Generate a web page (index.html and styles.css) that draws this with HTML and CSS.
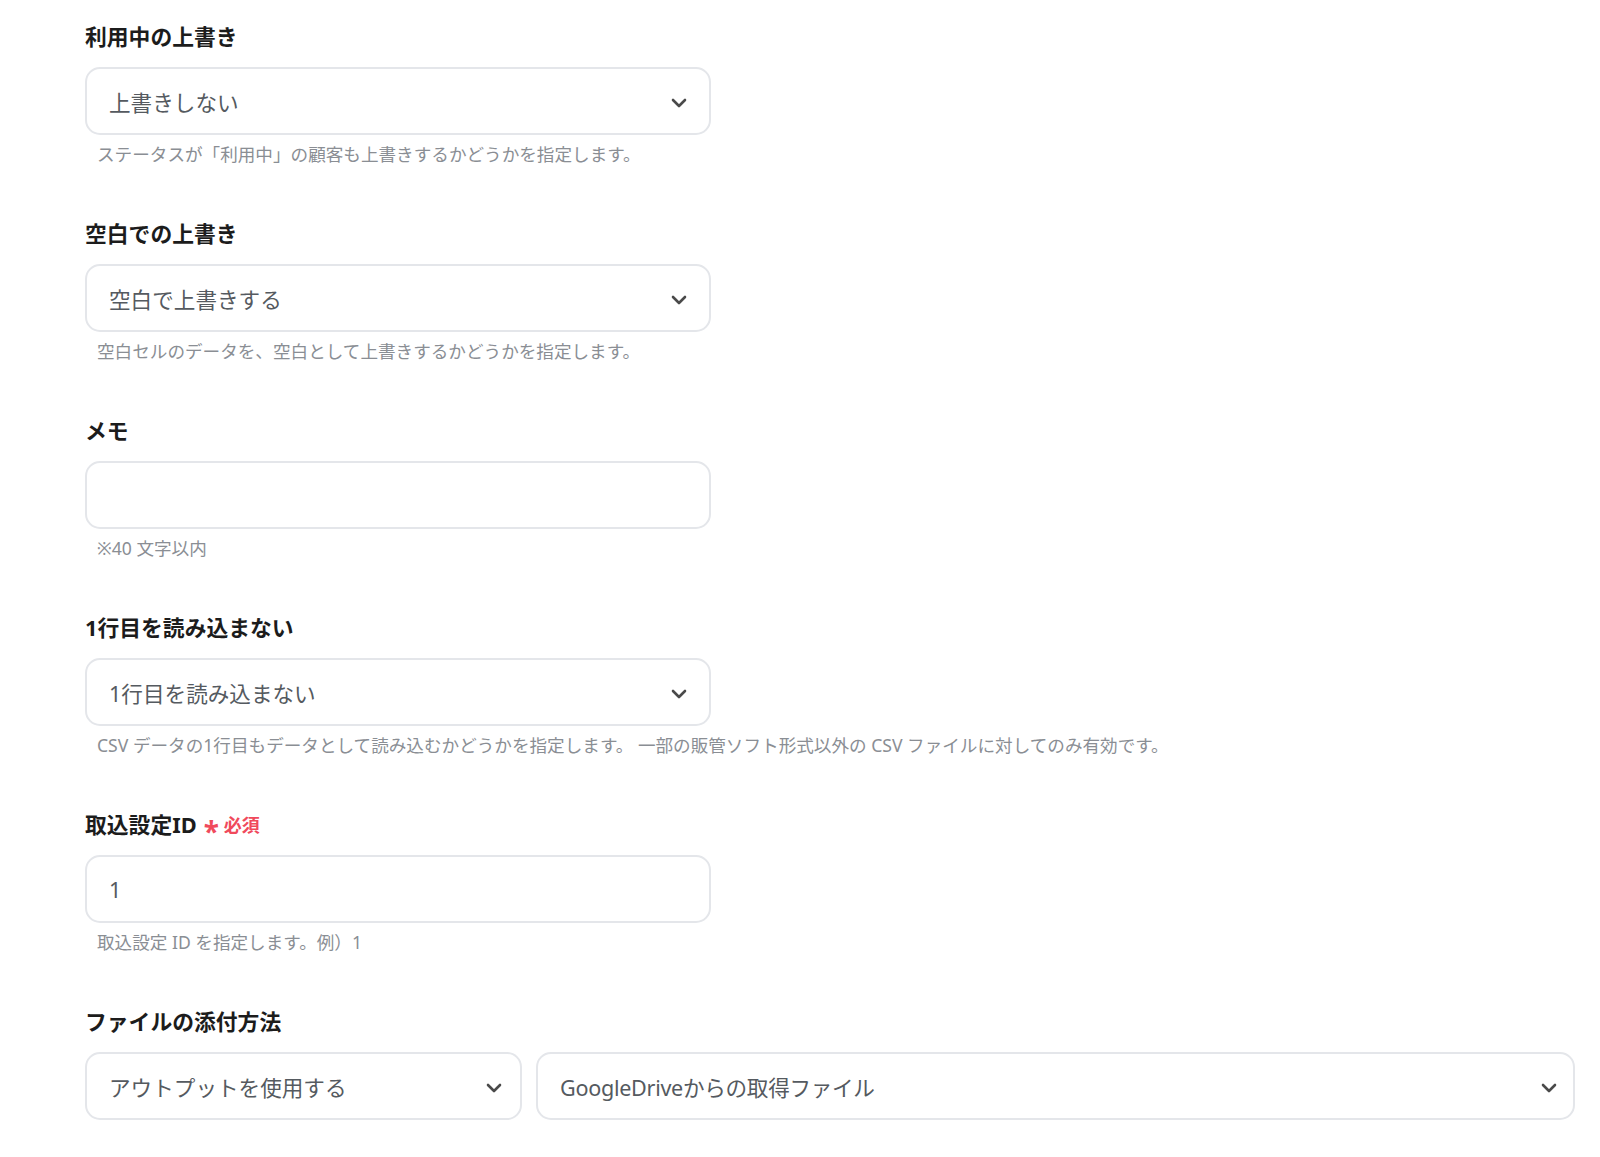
FILE: index.html
```html
<!DOCTYPE html>
<html lang="ja">
<head>
<meta charset="utf-8">
<title>設定</title>
<link rel="stylesheet" href="styles.css">
</head>
<body>
<div class="form">
  <div class="field">
    <div class="label">利用中の上書き</div>
    <div class="box select">
      <span class="value">上書きしない</span>
      <svg class="chev" viewBox="0 0 16 10" width="16" height="10"><path d="M2 2 L8 8 L14 2" fill="none" stroke="#4a4a4a" stroke-width="2.6" stroke-linecap="round" stroke-linejoin="round"/></svg>
    </div>
    <div class="help">ステータスが「利用中」の顧客も上書きするかどうかを指定します。</div>
  </div>

  <div class="field">
    <div class="label">空白での上書き</div>
    <div class="box select">
      <span class="value">空白で上書きする</span>
      <svg class="chev" viewBox="0 0 16 10" width="16" height="10"><path d="M2 2 L8 8 L14 2" fill="none" stroke="#4a4a4a" stroke-width="2.6" stroke-linecap="round" stroke-linejoin="round"/></svg>
    </div>
    <div class="help">空白セルのデータを、空白として上書きするかどうかを指定します。</div>
  </div>

  <div class="field">
    <div class="label">メモ</div>
    <div class="box"></div>
    <div class="help">※40 文字以内</div>
  </div>

  <div class="field">
    <div class="label">1行目を読み込まない</div>
    <div class="box select">
      <span class="value">1行目を読み込まない</span>
      <svg class="chev" viewBox="0 0 16 10" width="16" height="10"><path d="M2 2 L8 8 L14 2" fill="none" stroke="#4a4a4a" stroke-width="2.6" stroke-linecap="round" stroke-linejoin="round"/></svg>
    </div>
    <div class="help">CSV データの1行目もデータとして読み込むかどうかを指定します。 一部の販管ソフト形式以外の CSV ファイルに対してのみ有効です。</div>
  </div>

  <div class="field">
    <div class="label">取込設定ID <span class="req"><span class="ast">*</span>必須</span></div>
    <div class="box">
      <span class="value">1</span>
    </div>
    <div class="help">取込設定 ID を指定します。例）1</div>
  </div>

  <div class="field">
    <div class="label">ファイルの添付方法</div>
    <div class="row">
      <div class="box select narrow">
        <span class="value">アウトプットを使用する</span>
        <svg class="chev" viewBox="0 0 16 10" width="16" height="10"><path d="M2 2 L8 8 L14 2" fill="none" stroke="#4a4a4a" stroke-width="2.6" stroke-linecap="round" stroke-linejoin="round"/></svg>
      </div>
      <div class="box select wide">
        <span class="value latin">GoogleDriveからの取得ファイル</span>
        <svg class="chev" viewBox="0 0 16 10" width="16" height="10"><path d="M2 2 L8 8 L14 2" fill="none" stroke="#4a4a4a" stroke-width="2.6" stroke-linecap="round" stroke-linejoin="round"/></svg>
      </div>
    </div>
  </div>
</div>
</body>
</html>
```

FILE: styles.css
```css
html, body {
  margin: 0;
  padding: 0;
  background: #ffffff;
}

body {
  font-family: "Noto Sans", "Noto Sans CJK JP", sans-serif;
  color: #1f1f1f;
}

.form {
  padding: 24px 25px 0 85px;
}

.field {
  display: flex;
  flex-direction: column;
  height: 197px;
}

.label {
  font-size: 21.8px;
  font-weight: 700;
  line-height: 28px;
  height: 28px;
  margin-bottom: 15px;
  color: #1c1c1c;
  display: flex;
  align-items: center;
  position: relative;
  top: -1px;
}

.req {
  color: #f04a5c;
  font-size: 18px;
  font-weight: 700;
  margin-left: 7px;
  display: inline-flex;
  align-items: center;
}

.ast {
  font-size: 28px;
  line-height: 1;
  margin-right: 5px;
  position: relative;
  top: 6px;
}

.box {
  box-sizing: border-box;
  width: 626px;
  height: 68px;
  border: 2px solid #e4e6ea;
  border-radius: 15px;
  background: #fff;
  display: flex;
  align-items: center;
  padding: 0 22px 0 22px;
}

.value {
  flex: 1;
  font-size: 21.6px;
  color: #555a60;
  white-space: nowrap;
}

.value.latin {
  letter-spacing: -0.3px;
}

.chev {
  flex: none;
  position: relative;
  top: 2px;
}

.help {
  margin-top: 7px;
  padding-left: 12px;
  font-size: 17.6px;
  line-height: 24px;
  color: #8a8e94;
  white-space: nowrap;
}

.row {
  display: flex;
  gap: 14px;
}

.row .box {
  padding-right: 18px;
}

.box.narrow {
  width: 437px;
}

.box.wide {
  width: auto;
  flex: 1;
  padding-right: 16px;
}
```
